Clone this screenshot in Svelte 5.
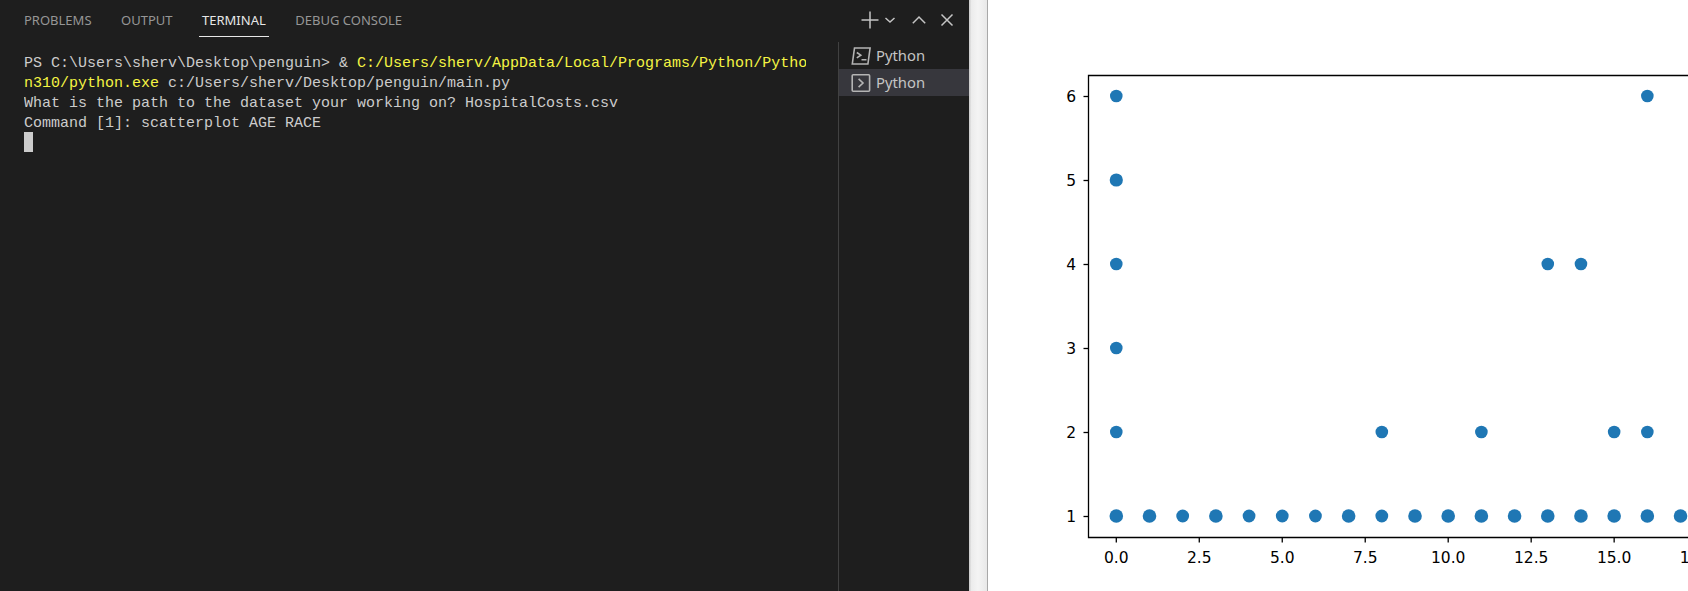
<script lang="ts">
	const tabs = [
		{ label: 'PROBLEMS', active: false },
		{ label: 'OUTPUT', active: false },
		{ label: 'TERMINAL', active: true },
		{ label: 'DEBUG CONSOLE', active: false }
	];

	// plot scale, measured from the axes
	const sx = (v: number) => 1116.3 + v * 33.19;
	const sy = (v: number) => 516 - (v - 1) * 84;

	const xTicks = ['0.0', '2.5', '5.0', '7.5', '10.0', '12.5', '15.0', '17.5'];
	const yTicks = [1, 2, 3, 4, 5, 6];

	const thinAges = [2, 4, 5, 6, 8];
	const bottomRow = Array.from({ length: 18 }, (_, i) => [i, 1, thinAges.includes(i) ? 6.4 : 6.8]);
	const points = [
		...bottomRow,
		[0, 2, 6.3], [8, 2, 6.3], [11, 2, 6.3], [15, 2, 6.3], [16, 2, 6.3],
		[0, 3, 6.3],
		[0, 4, 6.3], [13, 4, 6.3], [14, 4, 6.3],
		[0, 5, 6.6],
		[0, 6, 6.3], [16, 6, 6.3]
	];
</script>

<div class="screen">
	<section class="panel">
		<header class="panel-head">
			<nav class="tabs">
				{#each tabs as tab}
					<span class="tab" class:active={tab.active}>{tab.label}</span>
				{/each}
			</nav>
			<div class="actions">
				<svg class="plus" width="18" height="18" viewBox="0 0 18 18"><path d="M9 0.5v17M0.5 9h17" /></svg>
				<svg class="chev" width="12" height="12" viewBox="0 0 12 12"><path d="M1.5 4 6 8l4.5-4" /></svg>
				<svg class="up" width="14" height="14" viewBox="0 0 14 14"><path d="M0.8 10.2 7 4l6.2 6.2" /></svg>
				<svg class="close" width="14" height="14" viewBox="0 0 14 14"><path d="M1.5 1.5l11 11M12.5 1.5l-11 11" /></svg>
			</div>
		</header>
		<div class="panel-body">
			<div class="terminal">
				<div class="line">PS C:\Users\sherv\Desktop\penguin&gt; &amp; <span class="yellow">C:/Users/sherv/AppData/Local/Programs/Python/Pytho</span></div>
				<div class="line"><span class="yellow">n310/python.exe</span> c:/Users/sherv/Desktop/penguin/main.py</div>
				<div class="line">What is the path to the dataset your working on? HospitalCosts.csv</div>
				<div class="line">Command [1]: scatterplot AGE RACE</div>
				<div class="cursor"></div>
			</div>
			<aside class="shells">
				<div class="shell">
					<svg width="20" height="18" viewBox="0 0 20 18"><path d="M3.5 1h15.6l-2.2 16H1.3z" /><path d="M5.8 5.5l4 2.7-4 2.7M10.5 12.8h5" /></svg>
					<span>Python</span>
				</div>
				<div class="shell selected">
					<svg width="20" height="18" viewBox="0 0 20 18"><rect x="1.2" y="0.8" width="17.4" height="16.4" rx="1" /><path d="M7.6 4.8 12 9l-4.4 4.2" /></svg>
					<span>Python</span>
				</div>
			</aside>
		</div>
	</section>

	<div class="gutter"></div>

	<main class="figure">
		<svg class="plot" width="1688" height="591" viewBox="0 0 1688 591">
			<g class="dots">
				{#each points as [x, y, r]}
					<circle cx={sx(x)} cy={sy(y)} {r} />
				{/each}
			</g>
			<path class="frame" d="M1688 75.5H1088.5V537.5H1688" />
			{#each yTicks as t}
				<path class="frame" d="M1083.5 {sy(t) + 0.5}h5" />
				<text class="tick" x="1076" y={sy(t) + 6} text-anchor="end">{t}</text>
			{/each}
			{#each xTicks as t, i}
				<path class="frame" d="M{sx(i * 2.5)} 537.5v5" />
				<text class="tick" x={sx(i * 2.5)} y="562.5" text-anchor="middle">{t}</text>
			{/each}
		</svg>
	</main>
</div>

<style>
	:global(body) {
		margin: 0;
		background: #fff;
		overflow: hidden;
	}
	.screen {
		display: flex;
		width: 1688px;
		height: 591px;
		overflow: hidden;
		position: relative;
	}
	.panel {
		width: 969px;
		flex: none;
		background: #1e1e1e;
		display: flex;
		flex-direction: column;
	}
	.panel-head {
		height: 42px;
		display: flex;
		justify-content: space-between;
		padding-left: 24px;
		box-sizing: border-box;
		flex: none;
	}
	.tabs {
		display: flex;
		gap: 26.5px;
		font: 13px/1 "Noto Sans", sans-serif;
	}
	.tab {
		color: #969696;
		height: 37px;
		line-height: 40px;
		padding: 0 3px;
		margin-left: -3px;
		box-sizing: border-box;
	}
	.tab.active {
		color: #e7e7e7;
		border-bottom: 1px solid #e7e7e7;
	}
	.actions {
		display: flex;
		align-items: center;
		height: 40px;
		padding-right: 15.5px;
	}
	.actions svg {
		fill: none;
		stroke: #c5c5c5;
		stroke-width: 1.5;
		flex: none;
	}
	.chev {
		margin: 0 16px 0 5.5px;
	}
	.up {
		margin-right: 13.5px;
	}
	.panel-body {
		flex: 1;
		display: flex;
		min-height: 0;
	}
	.terminal {
		width: 782px;
		margin: 10px 32px 0 24px;
		flex: none;
		overflow: hidden;
		font: 15px/24px "Liberation Mono", monospace;
		color: #cccccc;
	}
	.line {
		white-space: pre;
		height: 20px;
	}
	.yellow {
		color: #f5f543;
	}
	.cursor {
		width: 9px;
		height: 20px;
		background: #cccccc;
	}
	.shells {
		flex: 1;
		border-left: 1px solid #414141;
		min-width: 0;
	}
	.shell {
		height: 27px;
		display: flex;
		align-items: center;
		gap: 5px;
		padding-left: 12px;
		color: #c4c4c4;
		font: 14.8px/1 "Noto Sans", sans-serif;
	}
	.shell svg {
		fill: none;
		stroke: #b4b4b4;
		stroke-width: 1.6;
		flex: none;
	}
	.shell.selected {
		background: #37373d;
	}
	.gutter {
		width: 18px;
		flex: none;
		background: linear-gradient(90deg, #c8c8c8, #ececec 14%, #f4f4f4 50%, #e8e8e8);
		border-right: 1px solid #a8a8a8;
	}
	.figure {
		flex: 1;
		background: #fff;
	}
	.plot {
		position: absolute;
		inset: 0;
		pointer-events: none;
	}
	.dots circle {
		fill: #1f77b4;
	}
	.frame {
		fill: none;
		stroke: #000;
		stroke-width: 1.3;
	}
	.tick {
		font: 15.5px "DejaVu Sans", sans-serif;
		fill: #000;
	}
</style>
